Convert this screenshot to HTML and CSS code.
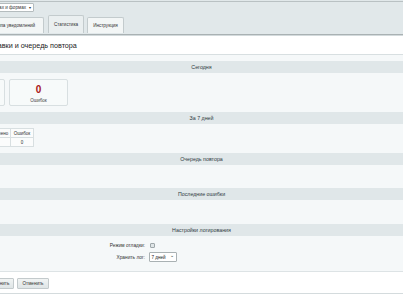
FILE: index.html
```html
<!DOCTYPE html>
<html lang="ru">
<head>
<meta charset="utf-8">
<title>Статистика</title>
<link rel="stylesheet" href="styles.css">
</head>
<body>
<div class="page">
  <div class="top-edge"></div>
  <div class="top">
    <div class="select-row">
      <div class="fake-select"><span class="fs-text">Уведомления об ошибках и формах</span><span class="fs-arrow">▾</span></div>
    </div>
    <div class="tabs">
      <div class="tab tab-1">Группа уведомлений</div>
      <div class="tab tab-active">Статистика</div>
      <div class="tab tab-3">Инструкция</div>
    </div>
  </div>
  <div class="title-bar"><h1 class="title">Статистика отправки и очередь повтора</h1></div>
  <div class="panel">
    <div class="heading">Сегодня</div>
    <div class="sec sec-cards">
      <div class="card"><div class="card-num card-num-ok">0</div><div class="card-label">Отправлено</div></div>
      <div class="card"><div class="card-num">0</div><div class="card-label">Ошибок</div></div>
    </div>
    <div class="heading">За 7 дней</div>
    <div class="sec sec-table">
      <table class="stat">
        <tr><th class="c1">Отправлено</th><th class="c2">Получено</th><th class="c3">Ошибок</th></tr>
        <tr><td>0</td><td>0</td><td>0</td></tr>
      </table>
    </div>
    <div class="heading">Очередь повтора</div>
    <div class="sec sec-empty1"></div>
    <div class="heading">Последние ошибки</div>
    <div class="sec sec-empty2"></div>
    <div class="heading">Настройки логирования</div>
    <div class="sec sec-form">
      <div class="frow frow-1"><div class="flabel">Режим отладки:</div><div class="fval"><span class="checkbox"></span></div></div>
      <div class="frow frow-2"><div class="flabel">Хранить лог:</div><div class="fval"><div class="mini-select"><span>7 дней</span><span class="ms-arrow">⌄</span></div></div></div>
    </div>
  </div>
  <div class="buttons">
    <div class="btn btn-1">Сохранить</div>
    <div class="btn btn-2">Применить</div>
    <div class="btn btn-3">Отменить</div>
  </div>
  <div class="bottom-bar"></div>
</div>
</body>
</html>
```
FILE: styles.css
```css
html, body {
  margin: 0;
  padding: 0;
  overflow: hidden;
  background: #ffffff;
}
body {
  width: 403px;
  height: 294px;
  font-family: "Liberation Sans", Arial, sans-serif;
  color: #333;
}
.page {
  margin-left: -66px;
  width: 535px;
}
.top-edge {
  height: 1px;
  background: #e1e8ea;
}
.top {
  background: #e1e8ea;
  border-top: 1px solid #b9c1c3;
  border-bottom: 1px solid #a9b1b3;
  padding-top: 1px;
  height: 31px;
}
.select-row {
  display: flex;
  height: 9px;
  margin-bottom: 3px;
}
.fake-select {
  margin-left: 20px;
  width: 80px;
  height: 9px;
  box-sizing: border-box;
  background: #fff;
  border: 1px solid #b4bcbe;
  border-radius: 1px;
  display: flex;
  justify-content: flex-end;
  align-items: center;
  overflow: hidden;
  font-size: 4.6px;
  white-space: nowrap;
  padding-right: 2px;
}
.fs-text { flex: none; }
.fs-arrow { flex: none; margin-left: 3px; font-size: 4px; }
.tabs {
  display: flex;
  align-items: flex-end;
  height: 18px;
  padding-left: 48px;
}
.tab {
  box-sizing: border-box;
  height: 16px;
  background: #f3f6f6;
  border: 1px solid #c3cbcd;
  border-bottom: none;
  border-radius: 2px 2px 0 0;
  font-size: 4.6px;
  display: flex;
  align-items: center;
  justify-content: center;
  white-space: nowrap;
  margin-right: 3px;
}
.tab-1 { width: 62px; margin-right: 4px; }
.tab-active { width: 36px; height: 18px; background: #eaeff0; margin-right: 3px; }
.tab-3 { width: 37px; }
.title-bar {
  border-top: 1px solid #d3dadc;
  height: 18px;
  border-bottom: 1px solid #d8dfe1;
  display: flex;
  align-items: center;
  padding-left: 9px;
}
.title {
  margin: 0;
  font-size: 7.2px;
  font-weight: normal;
  color: #222;
  white-space: nowrap;
}
.panel {
  background: #f5f8f9;
  padding-top: 6px;
  border-bottom: 1px solid #dde3e5;
}
.heading {
  height: 12px;
  background: #e0e7e9;
  font-size: 5.3px;
  color: #2f3b3f;
  display: flex;
  align-items: center;
  justify-content: center;
}
.sec { box-sizing: border-box; }
.sec-cards {
  display: flex;
  gap: 4px;
  padding: 6px 0 6px 12px;
}
.card {
  box-sizing: border-box;
  width: 59px;
  height: 27px;
  background: #f7fafa;
  border: 1px solid #d8dfe1;
  border-radius: 2px;
  display: flex;
  flex-direction: column;
  align-items: center;
  padding-top: 5px;
}
.card-num {
  font-size: 10px;
  line-height: 10px;
  font-weight: bold;
  color: #a81414;
}
.card-num-ok { color: #2e7d32; }
.card-label {
  font-size: 4.5px;
  margin-top: 3px;
  color: #444;
}
.sec-table {
  padding: 4px 0 6px 12px;
}
.stat {
  border-collapse: collapse;
  table-layout: fixed;
  font-size: 4.5px;
  background: #fbfcfc;
}
.stat th, .stat td {
  border: 1px solid #d8dfe1;
  height: 8px;
  padding: 0;
  text-align: center;
  font-weight: normal;
  white-space: nowrap;
  color: #333;
}
.stat .c1 { width: 38px; }
.stat .c2 { width: 24px; }
.stat .c3 { width: 22px; }
.sec-empty1 { height: 23px; }
.sec-empty2 { height: 24px; }
.sec-form {
  padding: 4px 0 8px 0;
  height: 35px;
}
.frow {
  display: grid;
  grid-template-columns: 214px 1fr;
  align-items: center;
  font-size: 4.8px;
}
.frow-1 { height: 10px; margin-bottom: 1px; }
.frow-2 { height: 12px; }
.flabel {
  text-align: right;
  padding-right: 3px;
  color: #333;
  white-space: nowrap;
}
.fval { display: flex; align-items: center; padding-left: 0.5px; }
.checkbox {
  display: block;
  width: 5px;
  height: 5px;
  box-sizing: border-box;
  border: 1px solid #9ea7aa;
  background: #dfe5e7;
  border-radius: 1px;
  margin-left: 1px;
}
.mini-select {
  box-sizing: border-box;
  width: 28px;
  height: 10px;
  background: #fff;
  border: 1px solid #a9b1b3;
  border-radius: 1px;
  display: flex;
  align-items: center;
  justify-content: space-between;
  padding: 0 2px;
  font-size: 4.6px;
  color: #222;
}
.ms-arrow { font-size: 4.5px; line-height: 4px; margin-top: -2px; }
.buttons {
  display: flex;
  gap: 3px;
  padding: 6px 0 0 12px;
  height: 15px;
}
.btn {
  box-sizing: border-box;
  height: 11px;
  background: linear-gradient(#f1f4f4, #dfe5e6);
  border: 1px solid #c3cacc;
  border-radius: 1px;
  font-size: 4.6px;
  color: #333;
  display: flex;
  align-items: center;
  justify-content: center;
  white-space: nowrap;
}
.btn-1 { width: 32px; }
.btn-2 { width: 33px; }
.btn-3 { width: 32px; }
.bottom-bar {
  height: 6px;
  background: #e2e8ea;
  border-top: 1px solid #d4dbdd;
}
```
